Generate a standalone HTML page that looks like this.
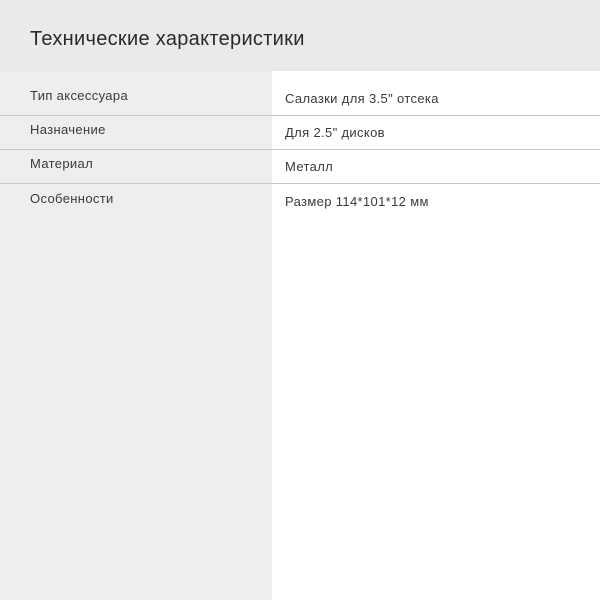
<!DOCTYPE html>
<html><head><meta charset="utf-8"><style>
body{margin:0;width:600px;height:600px;background:#fff;font-family:"Liberation Sans",sans-serif;position:relative;overflow:hidden}
.hd{position:absolute;left:0;top:0;width:600px;height:71px;background:#ebe9e9}
.hd span{position:absolute;left:30px;top:28px;font-size:20px;color:#2a2a2a;letter-spacing:0.3px}
.lc{position:absolute;left:0;top:71px;width:272px;height:529px;background:#efeded}
.ln{position:absolute;left:0;width:600px;height:1px;background:#c8c6c6}
.t{position:absolute;font-size:13px;color:#3a3a3a;white-space:nowrap;letter-spacing:0.35px}
</style></head><body>
<div class="hd"><span>Технические характеристики</span></div>
<div class="lc"></div>
<div class="ln" style="top:115px"></div>
<div class="ln" style="top:149px"></div>
<div class="ln" style="top:183px"></div>
<div class="t" style="left:30px;top:88px">Тип аксессуара</div>
<div class="t" style="left:285px;top:91px">Салазки для 3.5" отсека</div>
<div class="t" style="left:30px;top:122px">Назначение</div>
<div class="t" style="left:285px;top:125px">Для 2.5" дисков</div>
<div class="t" style="left:30px;top:156px">Материал</div>
<div class="t" style="left:285px;top:159px">Металл</div>
<div class="t" style="left:30px;top:191px">Особенности</div>
<div class="t" style="left:285px;top:194px">Размер 114*101*12 мм</div>
</body></html>
